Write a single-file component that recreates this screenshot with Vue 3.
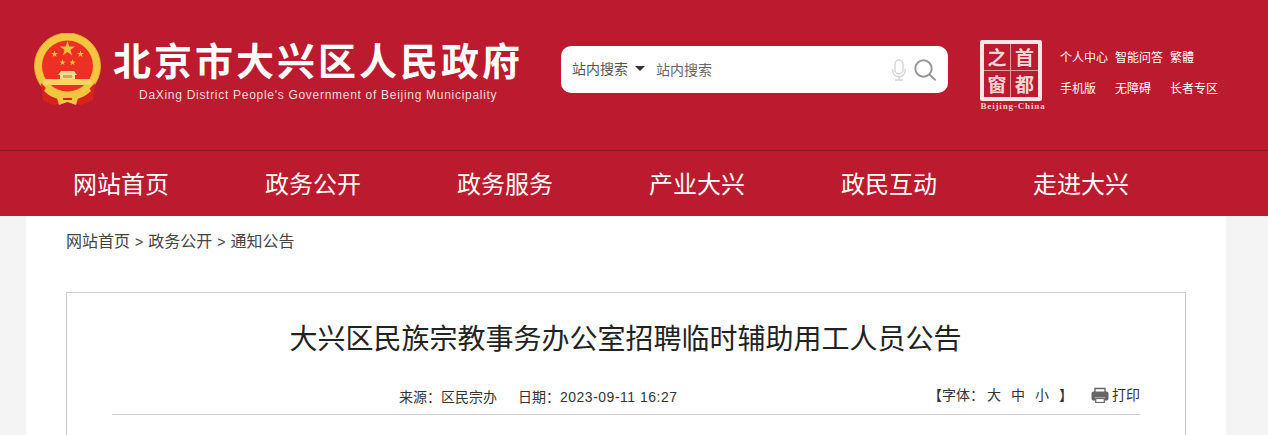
<template>
  <div class="page">
    <header class="top">
      <div class="top-inner">
        <svg class="emblem" viewBox="0 0 68 74" width="68" height="74">
          <defs>
            <path id="star" d="M0 -1L.225 -.309H.951L.363 .118L.588 .809L0 .382L-.588 .809L-.363 .118L-.951 -.309H-.225Z" fill="#eec23c" />
          </defs>
          <circle cx="34.500" cy="33" r="33" fill="#f4c53f" />
          <circle cx="34.500" cy="33" r="33" fill="none" stroke="#e3a72e" stroke-width="1" />
          <circle cx="34.500" cy="33" r="25.500" fill="#ee2f24" />
          <path d="M8 50 L10 67 L20 72 L34 69 L48 72 L60 67 L62 50 L55 57 C49 62 42 64 34.500 64 C27 64 20 62 15 57 Z" fill="#d8231d" />
          <use href="#star" transform="translate(34.500 16) scale(8)" />
          <use href="#star" transform="translate(21.500 21) scale(3.600)" />
          <use href="#star" transform="translate(47.500 21) scale(3.600)" />
          <use href="#star" transform="translate(29.500 29.500) scale(3.400)" />
          <use href="#star" transform="translate(39.500 29.500) scale(3.400)" />
          <path d="M28 38h13l3 4h-2v4h-15v-4h-2z" fill="#f7dc8a" />
          <path d="M30 42h9v3h-9z" fill="#e9a23a" />
          <path d="M11 46h47l1 6H10z" fill="#f8d460" />
          <path d="M14 53c5 5 12 8 20.500 8S50 58 55 53l3 5c-6 6-14 9-23.500 9S17 64 11 58z" fill="#f4c53f" />
          <path d="M23 62l5-4 6.500 3 6.500-3 5 4-3 10-8.500-3-8.500 3z" fill="#f4c53f" />
          <path d="M30 65h9v2h-9z" fill="#d8231d" />
        </svg>
        <div class="brand">
          <div class="brand-cn">北京市大兴区人民政府</div>
          <div class="brand-en">DaXing District People's Government of Beijing Municipality</div>
        </div>
        <div class="search">
          <span class="search-type">站内搜索</span>
          <i class="caret"></i>
          <input class="search-input" type="text" placeholder="站内搜索" />
          <svg class="mic" viewBox="0 0 14 22" width="14" height="22" fill="none" stroke="#d5d5d5" stroke-width="1.4">
            <rect x="3" y="1" width="8" height="14" rx="4" />
            <path d="M.8 10v1.500a6.200 6.200 0 0 0 12.400 0V10M7 17.700V21M3 21h8" />
          </svg>
          <svg class="lens" viewBox="0 0 22 22" width="22" height="22" fill="none" stroke="#999" stroke-width="2">
            <circle cx="9.500" cy="9.500" r="8.200" />
            <path d="M15.500 15.500l5.500 5.200" stroke-linecap="round" />
          </svg>
        </div>
        <div class="stamp">
          <div class="stamp-box">
            <span>之</span><span>首</span><span>窗</span><span>都</span>
          </div>
          <div class="stamp-en">Beijing-China</div>
        </div>
        <div class="links">
          <div class="links-row first">
            <a>个人中心</a><a>智能问答</a><a>繁體</a>
          </div>
          <div class="links-row second">
            <a>手机版</a><a>无障碍</a><a>长者专区</a>
          </div>
        </div>
      </div>
    </header>

    <nav class="nav">
      <ul class="nav-list">
        <li v-for="item in navItems" :key="item">{{ item }}</li>
      </ul>
    </nav>

    <main class="wrap">
      <div class="crumbs">
        <a>网站首页</a><span class="sep">&gt;</span><a>政务公开</a><span class="sep">&gt;</span><a>通知公告</a>
      </div>
      <article class="article">
        <h1 class="title">大兴区民族宗教事务办公室招聘临时辅助用工人员公告</h1>
        <div class="meta">
          <div class="meta-info">
            <span class="source">来源：区民宗办</span>
            <span>日期：<span class="date">2023-09-11 16:27</span></span>
          </div>
          <div class="meta-tools">
            <span class="font-size">【字体：<b>大</b><b>中</b><b>小</b>】</span>
            <span class="print">
              <svg viewBox="0 0 18 16" width="18" height="16">
                <path d="M4 5V1.500h10V5" fill="none" stroke="#666" stroke-width="1.400" />
                <path d="M2.500 4.500h13a2 2 0 0 1 2 2v5a2 2 0 0 1-2 2H14v-3H4v3H2.500a2 2 0 0 1-2-2v-5a2 2 0 0 1 2-2z" fill="#666" />
                <rect x="4.700" y="11.500" width="8.600" height="4" fill="none" stroke="#666" stroke-width="1.200" />
              </svg>
              打印
            </span>
          </div>
        </div>
      </article>
    </main>
  </div>
</template>

<script setup>
const navItems = ['网站首页', '政务公开', '政务服务', '产业大兴', '政民互动', '走进大兴']
</script>

<style>
html,
body {
  margin: 0;
  background: #f4f4f4;
  overflow: hidden;
}
</style>

<style scoped>
.page {
  font-family: "Liberation Sans", "Noto Sans CJK SC", sans-serif;
  color: #333;
}

.top {
  height: 150px;
  background: #bc1a2e;
  border-bottom: 1px solid #96141f;
}

.top-inner {
  display: flex;
  align-items: flex-start;
  padding-left: 33px;
}

.emblem {
  margin-top: 33px;
  flex: none;
}

.brand {
  width: 408px;
  margin-left: 12px;
  margin-top: 38px;
  flex: none;
}

.brand-cn {
  font-size: 38px;
  line-height: 48px;
  letter-spacing: 3px;
  font-weight: 700;
  color: #fff;
  white-space: nowrap;
}

.brand-en {
  margin-top: 1px;
  padding-left: 26px;
  font-size: 12px;
  line-height: 16px;
  letter-spacing: 0.71px;
  color: #f3dbde;
  white-space: nowrap;
}

.search {
  width: 387px;
  height: 47px;
  margin-left: 40px;
  margin-top: 46px;
  padding: 0 12px 0 11px;
  box-sizing: border-box;
  flex: none;
  display: flex;
  align-items: center;
  background: #fff;
  border-radius: 10px;
}

.search-type {
  font-size: 14px;
  line-height: 47px;
  color: #555;
  white-space: nowrap;
}

.caret {
  width: 0;
  height: 0;
  margin-left: 7px;
  margin-top: -3px;
  border-left: 5px solid transparent;
  border-right: 5px solid transparent;
  border-top: 5px solid #333;
}

.search-input {
  flex: 1;
  min-width: 0;
  margin-left: 11px;
  padding: 0;
  border: none;
  outline: none;
  background: transparent;
  font: 14px "Liberation Sans", "Noto Sans CJK SC", sans-serif;
  color: #555;
}

.search-input::placeholder {
  color: #666;
  opacity: 1;
}

.mic {
  flex: none;
}

.lens {
  margin-left: 8px;
  flex: none;
}

.stamp {
  width: 68px;
  margin-left: 31px;
  margin-top: 40px;
  flex: none;
  text-align: center;
}

.stamp-box {
  width: 62px;
  height: 61px;
  margin-left: 1px;
  box-sizing: border-box;
  border: 4px solid #f7e6e8;
  border-radius: 2px;
  display: grid;
  grid-template-columns: 1fr 1fr;
  grid-template-rows: 1fr 1fr;
}

.stamp-box span {
  font-size: 19px;
  line-height: 26px;
  font-weight: 700;
  text-align: center;
  color: #f3d5d9;
  font-family: "Noto Sans CJK SC", sans-serif;
}

.stamp-box span:nth-child(odd) {
  border-right: 1px solid #dd9aa3;
}

.stamp-box span:nth-child(-n+2) {
  border-bottom: 1px solid #dd9aa3;
}

.stamp-en {
  margin-top: 1px;
  font-family: "Liberation Serif", serif;
  font-size: 9px;
  line-height: 9px;
  font-weight: 700;
  letter-spacing: 0.85px;
  color: #eecdd1;
  white-space: nowrap;
}

.links {
  margin-left: 13px;
  margin-top: 49px;
  font-size: 12px;
  line-height: 18px;
  color: #fff;
}

.links-row {
  display: flex;
  white-space: nowrap;
}

.links-row.second {
  margin-top: 13px;
}

.links-row.first a {
  margin-right: 7px;
}

.links-row.second a:nth-child(1) {
  margin-right: 19px;
}

.links-row.second a:nth-child(2) {
  margin-right: 19px;
}

.nav {
  height: 65px;
  background: #bc1a2e;
}

.nav-list {
  display: flex;
  margin: 0;
  padding: 0 0 0 25px;
  list-style: none;
}

.nav-list li {
  width: 192px;
  text-align: center;
  font-size: 24px;
  line-height: 68px;
  color: #fff;
}

.wrap {
  width: 1200px;
  height: 219px;
  margin-left: 26px;
  padding: 0 40px;
  box-sizing: border-box;
  background: #fff;
  overflow: hidden;
}

.crumbs {
  display: flex;
  margin-top: 14px;
  font-size: 16px;
  line-height: 24px;
  color: #444;
}

.sep {
  margin: 0 5px 0 5px;
  font-size: 14px;
}

.article {
  margin-top: 38px;
  height: 300px;
  padding: 0 45px;
  border: 1px solid #ccc;
}

.title {
  margin: 27px 0 0 -1px;
  font-size: 28px;
  line-height: 40px;
  font-weight: 400;
  text-align: center;
  color: #222;
}

.meta {
  display: flex;
  align-items: flex-end;
  height: 34px;
  margin-top: 13px;
  padding-bottom: 7px;
  border-bottom: 1px solid #ccc;
  font-size: 14px;
  line-height: 20px;
  color: #333;
}

.meta-info {
  margin-left: 287px;
}

.source {
  margin-right: 21px;
}

.date {
  letter-spacing: 0.5px;
}

.meta-tools {
  margin-left: auto;
  margin-bottom: 2px;
  display: flex;
  align-items: center;
}

.font-size b {
  font-weight: 400;
  margin-right: 10px;
}

.font-size b:first-child {
  margin-left: 3px;
}

.print {
  margin-left: 18px;
  display: flex;
  align-items: center;
  gap: 3px;
}
</style>
